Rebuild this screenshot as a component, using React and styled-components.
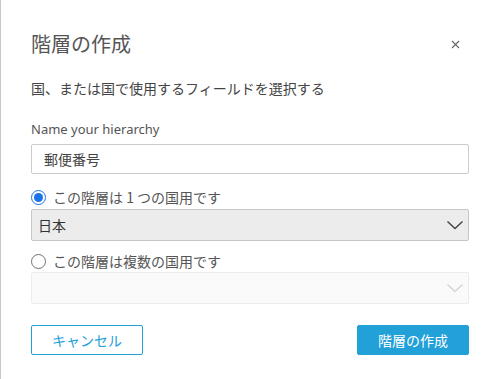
import React, { useState } from "react";
import styled, { createGlobalStyle } from "styled-components";

const GlobalStyle = createGlobalStyle`
  body {
    margin: 0;
    background: #fff;
    font-family: "Noto Sans", "Noto Sans CJK JP", sans-serif;
  }
`;

const Dialog = styled.div`
  box-sizing: border-box;
  width: 498px;
  height: 379px;
  border-left: 1px solid #c8c8c8;
  padding: 32px 29px 0 30px;
  background: #fff;
`;

const Header = styled.div`
  display: flex;
  align-items: center;
  justify-content: space-between;
  height: 24px;
`;

const Title = styled.h1`
  margin: 0;
  font-size: 20px;
  line-height: 24px;
  font-weight: 400;
  color: #555;
  font-family: "Noto Sans CJK JP", sans-serif;
`;

const CloseButton = styled.button`
  border: 0;
  background: none;
  padding: 0;
  margin-right: 9px;
  width: 10px;
  height: 10px;
  display: flex;
  align-items: center;
  justify-content: center;
  cursor: pointer;
`;

const Description = styled.p`
  margin: 22px 0 0;
  font-size: 14px;
  line-height: 20px;
  color: #444;
  font-family: "Noto Sans CJK JP", sans-serif;
`;

const Label = styled.label`
  display: block;
  margin-top: 22px;
  font-size: 13px;
  line-height: 18px;
  color: #555;
`;

const TextInput = styled.input`
  box-sizing: border-box;
  display: block;
  width: 100%;
  height: 30px;
  margin-top: 6px;
  padding: 0 12px;
  border: 1px solid #ccc;
  border-radius: 2px;
  font-size: 14px;
  color: #444;
  font-family: "Noto Sans CJK JP", sans-serif;
  outline: none;
`;

const RadioRow = styled.label`
  display: flex;
  align-items: center;
  gap: 7px;
  height: 18px;
  margin-top: ${(p) => p.$top}px;
  font-size: 14px;
  color: #555;
  font-family: "Noto Sans CJK JP", sans-serif;
  cursor: pointer;
`;

const RadioCircle = styled.span`
  box-sizing: border-box;
  width: 15px;
  height: 15px;
  border-radius: 50%;
  border: ${(p) => (p.$checked ? "1.5px solid #1a73e8" : "1px solid #707070")};
  display: flex;
  align-items: center;
  justify-content: center;
  &::after {
    content: "";
    width: 9px;
    height: 9px;
    border-radius: 50%;
    background: ${(p) => (p.$checked ? "#1a73e8" : "transparent")};
  }
`;

const Select = styled.div`
  box-sizing: border-box;
  height: 32px;
  margin-top: ${(p) => p.$top}px;
  padding: 0 4px 0 6px;
  display: flex;
  align-items: center;
  justify-content: space-between;
  border: 1px solid ${(p) => (p.$disabled ? "#ececec" : "#c6c6c6")};
  border-radius: 2px;
  background: ${(p) => (p.$disabled ? "#fafafa" : "#ececec")};
  font-size: 14px;
  color: #333;
  font-family: "Noto Sans CJK JP", sans-serif;
`;

const Footer = styled.div`
  display: flex;
  justify-content: space-between;
  margin-top: 21px;
`;

const Button = styled.button`
  box-sizing: border-box;
  width: 112px;
  height: 30px;
  border-radius: 2px;
  border: 1px solid #22a0d8;
  background: ${(p) => (p.$primary ? "#22a0d8" : "#fff")};
  color: ${(p) => (p.$primary ? "#fff" : "#22a0d8")};
  font-size: 14px;
  font-family: "Noto Sans CJK JP", sans-serif;
  cursor: pointer;
`;

const Chevron = ({ color }) => (
  <svg width="18" height="10" viewBox="0 0 18 10">
    <path d="M1.5 1.5 L9 8.5 L16.5 1.5" fill="none" stroke={color} strokeWidth="1.4" />
  </svg>
);

const Close = () => (
  <svg width="9" height="9" viewBox="0 0 9 9">
    <path d="M1 1 L8 8 M8 1 L1 8" stroke="#666" strokeWidth="1.1" />
  </svg>
);

export default function App() {
  const [mode, setMode] = useState("single");
  return (
    <>
      <GlobalStyle />
      <Dialog>
        <Header>
          <Title>階層の作成</Title>
          <CloseButton aria-label="close">
            <Close />
          </CloseButton>
        </Header>
        <Description>国、または国で使用するフィールドを選択する</Description>
        <Label>Name your hierarchy</Label>
        <TextInput defaultValue="郵便番号" />
        <RadioRow $top={14} onClick={() => setMode("single")}>
          <RadioCircle $checked={mode === "single"} />
          この階層は 1 つの国用です
        </RadioRow>
        <Select $top={3}>
          <span>日本</span>
          <Chevron color="#444" />
        </Select>
        <RadioRow $top={11} onClick={() => setMode("multi")}>
          <RadioCircle $checked={mode === "multi"} />
          この階層は複数の国用です
        </RadioRow>
        <Select $top={2} $disabled>
          <span />
          <Chevron color="#d4d4d4" />
        </Select>
        <Footer>
          <Button>キャンセル</Button>
          <Button $primary>階層の作成</Button>
        </Footer>
      </Dialog>
    </>
  );
}
